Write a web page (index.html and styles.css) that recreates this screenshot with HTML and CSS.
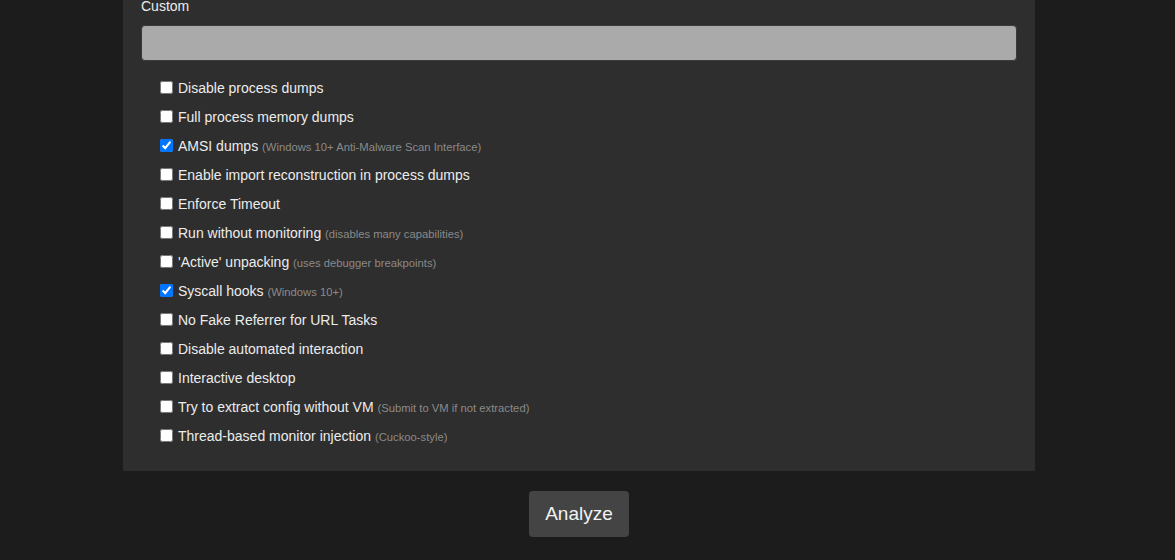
FILE: index.html
```html
<!DOCTYPE html>
<html>
<head>
<meta charset="utf-8">
<link rel="stylesheet" href="styles.css">
</head>
<body>
<div class="wrap">
  <div class="panel">
    <div class="label">Custom</div>
    <input class="custom" type="text">
    <ul class="opts">
      <li><input type="checkbox"><span>Disable process dumps</span></li>
      <li><input type="checkbox"><span>Full process memory dumps</span></li>
      <li><input type="checkbox" checked><span>AMSI dumps <small>(Windows 10+ Anti-Malware Scan Interface)</small></span></li>
      <li><input type="checkbox"><span>Enable import reconstruction in process dumps</span></li>
      <li><input type="checkbox"><span>Enforce Timeout</span></li>
      <li><input type="checkbox"><span>Run without monitoring <small>(disables many capabilities)</small></span></li>
      <li><input type="checkbox"><span>'Active' unpacking <small>(uses debugger breakpoints)</small></span></li>
      <li><input type="checkbox" checked><span>Syscall hooks <small>(Windows 10+)</small></span></li>
      <li><input type="checkbox"><span>No Fake Referrer for URL Tasks</span></li>
      <li><input type="checkbox"><span>Disable automated interaction</span></li>
      <li><input type="checkbox"><span>Interactive desktop</span></li>
      <li><input type="checkbox"><span>Try to extract config without VM <small>(Submit to VM if not extracted)</small></span></li>
      <li><input type="checkbox"><span>Thread-based monitor injection <small>(Cuckoo-style)</small></span></li>
    </ul>
  </div>
  <div class="actions"><button class="analyze">Analyze</button></div>
</div>
</body>
</html>
```
FILE: styles.css
```css
html, body {
  margin: 0;
  padding: 0;
  background: #1c1c1c;
  font-family: "Liberation Sans", Arial, sans-serif;
  color: #ececec;
}
.wrap {
  margin-left: 123px;
  width: 912px;
}
.panel {
  background: #2e2e2e;
  padding: 0 18px 21px 18px;
  margin-top: -3px;
}
.label {
  font-size: 14px;
  line-height: 18px;
  padding-bottom: 10px;
}
.custom {
  display: block;
  box-sizing: border-box;
  width: 100%;
  height: 36px;
  margin: 0;
  background: #aaaaaa;
  border: 1px solid #3a3a3a;
  border-radius: 4px;
  outline: none;
}
.opts {
  list-style: none;
  margin: 12px 0 0 0;
  padding: 0 0 0 15px;
}
.opts li {
  display: flex;
  align-items: center;
  height: 29px;
  font-size: 14px;
}
.opts input {
  width: 13px;
  height: 13px;
  margin: 0 5px 0 4px;
}
.opts small {
  font-size: 11.25px;
  color: #8a8a8a;
}
.actions {
  display: flex;
  justify-content: center;
  padding-top: 20px;
}
.analyze {
  width: 100px;
  height: 46px;
  background: #444444;
  color: #f2f2f2;
  border: none;
  border-radius: 4px;
  font-family: "Liberation Sans", Arial, sans-serif;
  font-size: 19px;
}
```
